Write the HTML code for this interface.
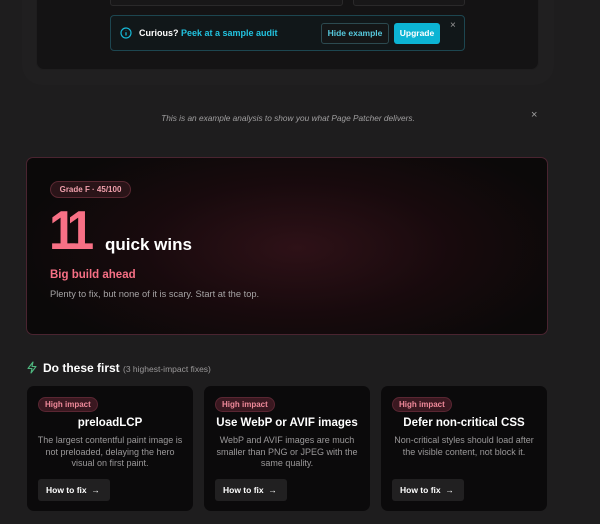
<!DOCTYPE html><html><head><style>
*{box-sizing:border-box;margin:0;padding:0}
body{width:600px;height:524px;background:#1e1d1e;font-family:"Liberation Sans",sans-serif;position:relative;overflow:hidden;color:#fff}
.a{position:absolute}
.card{background:#0b0a0b;border-radius:7px;width:166px;height:125px;top:386px}
.badge{position:absolute;left:11px;top:11px;height:15px;padding:0 6px;border-radius:8px;background:#3a1820;border:1px solid #5a2632;color:#f08a9a;font-size:8px;line-height:13px;font-weight:bold}
.t{position:absolute;left:0;right:0;top:31px;text-align:center;font-size:11.5px;font-weight:bold}
.d{position:absolute;left:10px;right:10px;top:49px;text-align:center;font-size:9px;line-height:11.6px;color:#9a9899}
.btn{position:absolute;left:11px;top:93px;width:72px;height:22px;background:#212021;border-radius:3px;font-size:8.5px;font-weight:bold;line-height:22px;padding-left:8px}
</style></head><body>
<div class="a" style="left:22px;top:-20px;width:532px;height:105px;background:#201f20;border-radius:20px"></div>
<div class="a" style="left:36px;top:-20px;width:503px;height:90px;background:#141314;border-radius:8px;border:1px solid #1e1d1e"></div>
<div class="a" style="left:110px;top:-10px;width:233px;height:16px;border:1px solid #2a292a;border-radius:3px;background:#181718"></div>
<div class="a" style="left:353px;top:-10px;width:112px;height:16px;border:1px solid #2a292a;border-radius:3px;background:#181718"></div>
<div class="a" style="left:110px;top:15px;width:355px;height:36px;background:#111719;border:1px solid #1d4650;border-radius:4px"></div>
<svg class="a" style="left:120px;top:27px" width="12" height="12" viewBox="0 0 12 12"><circle cx="6" cy="6" r="5" fill="none" stroke="#16b8d6" stroke-width="1.2"/><path d="M6 5.3v3.2M6 3.4v.2" stroke="#16b8d6" stroke-width="1.3"/></svg>
<div class="a" style="left:139px;top:28px;font-size:9px;font-weight:bold">Curious? <span style="color:#22c3e0">Peek at a sample audit</span></div>
<div class="a" style="left:321px;top:23px;width:68px;height:21px;border:1px solid #2c4a50;border-radius:3px;background:#141617;color:#56c8dc;font-size:8.5px;font-weight:bold;text-align:center;line-height:19px">Hide example</div>
<div class="a" style="left:394px;top:23px;width:46px;height:21px;border-radius:3px;background:#0cb4d4;font-size:8.5px;font-weight:bold;text-align:center;line-height:21px">Upgrade</div>
<div class="a" style="left:450px;top:20px;font-size:10px;color:#9a9a9a">×</div>
<div class="a" style="left:0;width:576px;top:113px;text-align:center;font-size:8.3px;font-style:italic;color:#a09fa0">This is an example analysis to show you what Page Patcher delivers.</div>
<div class="a" style="left:531px;top:109px;font-size:11px;color:#a0a0a0">×</div>
<div class="a" style="left:26px;top:157px;width:522px;height:178px;border:1px solid #4a2430;border-radius:7px;background:radial-gradient(ellipse 280px 120px at 270px 90px,#2e1117 0%,#180a0d 55%,#0b0909 100%)"></div>
<div class="a" style="left:50px;top:181px;width:81px;height:17px;border-radius:9px;background:#2a1418;border:1px solid #5a2832;color:#f0a0ac;font-size:8px;font-weight:bold;text-align:center;line-height:15px">Grade F · 45/100</div>
<div class="a" style="left:49px;top:200px;font-size:55px;font-weight:bold;color:#f77085;letter-spacing:-8px;line-height:60px;transform:scaleX(.9);transform-origin:left">11</div>
<div class="a" style="left:105px;top:235px;font-size:17px;font-weight:bold">quick wins</div>
<div class="a" style="left:50px;top:269px;font-size:11.5px;font-weight:bold;color:#f77085">Big build ahead</div>
<div class="a" style="left:50px;top:289px;font-size:9.3px;color:#a5a3a4">Plenty to fix, but none of it is scary. Start at the top.</div>
<svg class="a" style="left:26px;top:361px" width="12" height="13" viewBox="0 0 12 13"><path d="M7 1L2 7.5h4L5 12l5-6.5H6z" fill="none" stroke="#4fb77f" stroke-width="1.1" stroke-linejoin="round"/></svg>
<div class="a" style="left:43px;top:361px;font-size:12px;font-weight:bold">Do these first <span style="font-size:8.5px;font-weight:normal;color:#9a9899">(3 highest-impact fixes)</span></div>
<div class="a card" style="left:27px"><div class="badge">High impact</div><div class="t">preloadLCP</div><div class="d">The largest contentful paint image is not preloaded, delaying the hero visual on first paint.</div><div class="btn">How to fix &nbsp;→</div></div>
<div class="a card" style="left:204px"><div class="badge">High impact</div><div class="t">Use WebP or AVIF images</div><div class="d">WebP and AVIF images are much smaller than PNG or JPEG with the same quality.</div><div class="btn">How to fix &nbsp;→</div></div>
<div class="a card" style="left:381px"><div class="badge">High impact</div><div class="t">Defer non-critical CSS</div><div class="d">Non-critical styles should load after the visible content, not block it.</div><div class="btn">How to fix &nbsp;→</div></div>
</body></html>
